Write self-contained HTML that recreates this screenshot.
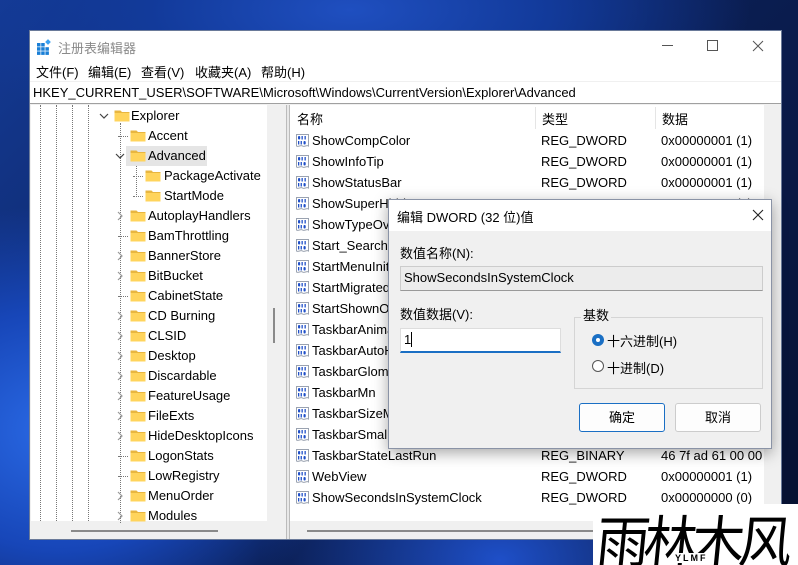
<!DOCTYPE html>
<html><head><meta charset="utf-8"><style>
*{margin:0;padding:0;box-sizing:border-box}
body{width:798px;height:565px;overflow:hidden;position:relative;font-family:"Liberation Sans","Noto Sans CJK SC",sans-serif;font-size:13px;color:#000;
background:radial-gradient(ellipse 380px 300px at 60px 430px,#2a6ae6 0%,#1746b8 40%,transparent 75%),
radial-gradient(ellipse 500px 200px at 350px 10px,#1f4fc0 0%,#123a9a 40%,transparent 80%),
radial-gradient(ellipse 300px 200px at 500px 560px,#1e4fc8 0%,transparent 80%),
linear-gradient(135deg,#143a94 0%,#0b1f55 50%,#06102e 100%);}
.a{position:absolute;white-space:nowrap}
.win{position:absolute;left:29px;top:30px;width:753px;height:510px;background:#f0f0f0;border:1px solid #6a7a99}
</style></head><body>
<div class="win">
 <div class="a" style="left:0;top:0;width:751px;height:50px;background:#fff"></div>
 <svg class="a" style="left:7px;top:8px" width="16" height="16" viewBox="0 0 16 16"><g fill="#1a7fd6"><rect x="0" y="4" width="3.5" height="3.5"/><rect x="4.2" y="4" width="3.5" height="3.5"/><rect x="0" y="8.2" width="3.5" height="3.5"/><rect x="4.2" y="8.2" width="3.5" height="3.5"/><rect x="8.4" y="8.2" width="3.5" height="3.5"/><rect x="0" y="12.4" width="3.5" height="3.5"/><rect x="4.2" y="12.4" width="3.5" height="3.5"/><rect x="8.4" y="12.4" width="3.5" height="3.5"/><rect x="9" y="1" width="4" height="4" transform="rotate(45 11 3)" fill="#3aa0f0"/></g></svg>
 <div class="a" style="left:28px;top:7px;color:#8a8a8a;font-size:13px">注册表编辑器</div>
 <div class="a" style="left:632px;top:14px;width:11px;height:1px;background:#555"></div>
 <div class="a" style="left:677px;top:9px;width:11px;height:11px;border:1px solid #555"></div>
 <svg class="a" style="left:722px;top:9px" width="12" height="12"><path d="M1 1L11 11M11 1L1 11" stroke="#555" stroke-width="1"/></svg>
 <div class="a" style="left:6px;top:31px">文件(F)</div>
 <div class="a" style="left:58px;top:31px">编辑(E)</div>
 <div class="a" style="left:111px;top:31px">查看(V)</div>
 <div class="a" style="left:165px;top:31px">收藏夹(A)</div>
 <div class="a" style="left:231px;top:31px">帮助(H)</div>
 <div class="a" style="left:0;top:51px;width:751px;height:22px;background:#fff;border-bottom:1px solid #a0a0a0"></div>
 <div class="a" style="left:3px;top:54px">HKEY_CURRENT_USER\SOFTWARE\Microsoft\Windows\CurrentVersion\Explorer\Advanced</div>
 <div class="a" style="left:1px;top:74px;width:236px;height:416px;background:#fff"></div>
 <div class="a" style="left:237px;top:74px;width:19px;height:416px;background:#f0f0f0"></div>
 <div class="a" style="left:243px;top:277px;width:2px;height:35px;background:#8a8a8a"></div>
 <div class="a" style="left:1px;top:490px;width:255px;height:18px;background:#f0f0f0"></div>
 <div class="a" style="left:41px;top:499px;width:147px;height:2px;background:#8a8a8a"></div>
 <div class="a" style="left:256px;top:74px;width:4px;height:434px;background:#e8e8e8;border-left:1px solid #bbb;border-right:1px solid #bbb"></div>
 <div class="a" style="left:10px;top:74px;height:416px;border-left:1px dotted #777"></div>
 <div class="a" style="left:26px;top:74px;height:416px;border-left:1px dotted #777"></div>
 <div class="a" style="left:42px;top:74px;height:416px;border-left:1px dotted #777"></div>
 <div class="a" style="left:58px;top:74px;height:416px;border-left:1px dotted #777"></div>
 <div class="a" style="left:90px;top:92px;height:400px;border-left:1px dotted #777"></div>
 <div class="a" style="left:106px;top:132px;height:34px;border-left:1px dotted #777"></div>
 <div class="a" style="left:260px;top:74px;width:474px;height:416px;background:#fff"></div>
 <div class="a" style="left:734px;top:74px;width:17px;height:416px;background:#f0f0f0"></div>
 <div class="a" style="left:260px;top:490px;width:491px;height:18px;background:#f0f0f0"></div>
 <div class="a" style="left:277px;top:499px;width:290px;height:2px;background:#8a8a8a"></div>
 <div class="a" style="left:505px;top:76px;width:1px;height:22px;background:#e5e5e5"></div>
 <div class="a" style="left:625px;top:76px;width:1px;height:22px;background:#e5e5e5"></div>
 <div class="a" style="left:267px;top:78px">名称</div>
 <div class="a" style="left:512px;top:78px">类型</div>
 <div class="a" style="left:632px;top:78px">数据</div>
</div>
<div id="tree"></div>
<div id="list"></div>
<svg width="0" height="0" style="position:absolute"><defs>
<g id="fd"><path d="M0.5 1.5h6l1.5 1.5h7.5v9.5h-15z" fill="#e8b640"/><rect x="0.5" y="4" width="15" height="8.5" fill="#ffd45c"/></g>
<g id="rv"><path d="M1.5 1.5h12v11.5c-2-1.5-4 1.5-6 0s-4 1.5-6 0z" fill="#fff" stroke="#9aa2b0"/><g fill="#1f4fc8"><rect x="3" y="3" width="2.2" height="3.5" rx="1"/><rect x="6.5" y="3" width="1.3" height="3.5"/><rect x="9.5" y="3" width="1.3" height="3.5"/><rect x="3" y="8" width="1.3" height="3.5"/><rect x="5.6" y="8" width="1.3" height="3.5"/><rect x="8.5" y="8" width="2.2" height="3.5" rx="1"/></g></g>
</defs></svg>
<script>
var t=[["Explorer",103,114,131,1],["Accent",0,130,148,0],["Advanced",119,130,148,1],["PackageActivate",0,145,164,0],["StartMode",0,145,164,0],
["AutoplayHandlers",119,130,148,2],["BamThrottling",0,130,148,0],["BannerStore",119,130,148,2],["BitBucket",119,130,148,2],["CabinetState",0,130,148,0],["CD Burning",119,130,148,2],["CLSID",119,130,148,2],["Desktop",119,130,148,2],["Discardable",119,130,148,2],["FeatureUsage",119,130,148,2],["FileExts",119,130,148,2],["HideDesktopIcons",119,130,148,2],["LogonStats",0,130,148,0],["LowRegistry",0,130,148,0],["MenuOrder",119,130,148,2],["Modules",119,130,148,2]];
var h="";
t.forEach(function(r,i){var y=116+i*20;
 if(r[0]=="Advanced")h+='<div class="a" style="left:126px;top:'+(y-10)+'px;width:81px;height:20px;background:#e5e5e5"></div>';
 if(r[4]==0)h+='<div class="a" style="left:'+(r[2]-12)+'px;top:'+y+'px;width:10px;border-top:1px dotted #777"></div>';
 if(r[4]==1)h+='<svg class="a" style="left:'+(r[1]-4)+'px;top:'+(y-3)+'px" width="10" height="6"><path d="M1 1l4 4l4-4" stroke="#444" fill="none" stroke-width="1.2"/></svg>';
 if(r[4]==2)h+='<svg class="a" style="left:'+(r[1]-2)+'px;top:'+(y-5)+'px" width="6" height="10"><path d="M1 1l4 4l-4 4" stroke="#999" fill="none" stroke-width="1.2"/></svg>';
 h+='<svg class="a" style="left:'+r[2]+'px;top:'+(y-7)+'px" width="16" height="13"><use href="#fd"/></svg>';
 h+='<div class="a" style="left:'+r[3]+'px;top:'+(y-8)+'px">'+r[0]+'</div>';});
document.getElementById("tree").innerHTML=h;
var L=[["ShowCompColor","REG_DWORD","0x00000001 (1)"],["ShowInfoTip","REG_DWORD","0x00000001 (1)"],["ShowStatusBar","REG_DWORD","0x00000001 (1)"],["ShowSuperHidden","REG_DWORD","0x00000000 (0)"],["ShowTypeOverlay","",""],["Start_SearchFiles","",""],["StartMenuInit","",""],["StartMigratedBrowserPin","",""],["StartShownOnUpgrade","",""],["TaskbarAnimations","",""],["TaskbarAutoHideInTabletMode","",""],["TaskbarGlomLevel","",""],["TaskbarMn","",""],["TaskbarSizeMove","",""],["TaskbarSmallIcons","",""],["TaskbarStateLastRun","REG_BINARY","46 7f ad 61 00 00"],["WebView","REG_DWORD","0x00000001 (1)"],["ShowSecondsInSystemClock","REG_DWORD","0x00000000 (0)"]];
h="";
L.forEach(function(r,i){var y=141+i*21;
 h+='<svg class="a" style="left:295px;top:'+(y-8)+'px" width="16" height="16"><use href="#rv"/></svg>';
 h+='<div class="a" style="left:312px;top:'+(y-8)+'px">'+r[0]+'</div>';
 h+='<div class="a" style="left:541px;top:'+(y-8)+'px">'+r[1]+'</div>';
 h+='<div class="a" style="left:661px;top:'+(y-8)+'px;width:102px;overflow:hidden">'+r[2]+'</div>';});
document.getElementById("list").innerHTML=h;
</script>
<div class="a" style="left:388px;top:199px;width:384px;height:250px;background:#f0f0f0;border:1px solid #8a93a6;box-shadow:0 4px 14px rgba(0,0,0,.35)">
 <div class="a" style="left:0;top:0;width:382px;height:31px;background:#fff"></div>
 <div class="a" style="left:8px;top:7px">编辑 DWORD (32 位)值</div>
 <svg class="a" style="left:363px;top:9px" width="12" height="12"><path d="M1 1L11 11M11 1L1 11" stroke="#222" stroke-width="1.1"/></svg>
 <div class="a" style="left:11px;top:43px">数值名称(N):</div>
 <div class="a" style="left:11px;top:66px;width:363px;height:25px;background:#ececec;border:1px solid #ccc;border-bottom-color:#999"></div>
 <div class="a" style="left:15px;top:70px">ShowSecondsInSystemClock</div>
 <div class="a" style="left:11px;top:104px">数值数据(V):</div>
 <div class="a" style="left:11px;top:128px;width:161px;height:25px;background:#fff;border:1px solid #ddd;border-bottom:2px solid #1a6fc4"></div>
 <div class="a" style="left:15px;top:132px">1<span style="display:inline-block;width:1px;height:15px;background:#000;vertical-align:-3px"></span></div>
 <div class="a" style="left:185px;top:117px;width:189px;height:72px;border:1px solid #d5d5d5"></div>
 <div class="a" style="left:192px;top:105px;background:#f0f0f0;padding:0 2px">基数</div>
 <div class="a" style="left:203px;top:134px;width:12px;height:12px;border-radius:50%;background:#1a6fc4"></div>
 <div class="a" style="left:207px;top:138px;width:4px;height:4px;border-radius:50%;background:#fff"></div>
 <div class="a" style="left:218px;top:131px">十六进制(H)</div>
 <div class="a" style="left:203px;top:160px;width:12px;height:12px;border-radius:50%;border:1px solid #555;background:#fff"></div>
 <div class="a" style="left:218px;top:158px">十进制(D)</div>
 <div class="a" style="left:190px;top:203px;width:86px;height:29px;background:#fdfdfd;border:1px solid #1a6fc4;border-radius:3px;text-align:center;line-height:27px">确定</div>
 <div class="a" style="left:286px;top:203px;width:86px;height:29px;background:#fdfdfd;border:1px solid #ccc;border-radius:3px;text-align:center;line-height:27px">取消</div>
</div>
<div class="a" style="left:593px;top:504px;width:205px;height:61px;background:#fff;overflow:hidden">
 <div class="a" style="left:4px;top:-6px;font-size:56px;font-weight:normal;letter-spacing:-6px;color:#000;font-family:'Noto Sans CJK SC',sans-serif;transform:scaleX(0.95) skewX(-6deg);transform-origin:left">雨林木风</div>
 <div class="a" style="left:80px;top:49px;font-size:9px;font-weight:bold;letter-spacing:2px;color:#000;background:#fff;padding:0 2px">YLMF</div>
</div>
</body></html>
